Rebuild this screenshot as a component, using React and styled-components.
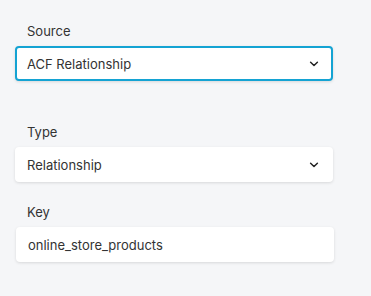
import React from 'react';
import styled, { createGlobalStyle } from 'styled-components';

const GlobalStyle = createGlobalStyle`
  body {
    margin: 0;
    background: #f5f6f8;
    font-family: Inter, "Noto Sans", sans-serif;
  }
`;

export default function App() {
  return (
    <>
      <GlobalStyle />
      <StyledPanel>
        <StyledField $spacing={43}>
          <StyledLabel>Source</StyledLabel>
          <StyledBox $active>
            <StyledValue>ACF Relationship</StyledValue>
            <Chevron />
          </StyledBox>
        </StyledField>
        <StyledField $spacing={22}>
          <StyledLabel>Type</StyledLabel>
          <StyledBox>
            <StyledValue>Relationship</StyledValue>
            <Chevron />
          </StyledBox>
        </StyledField>
        <StyledField>
          <StyledLabel>Key</StyledLabel>
          <StyledBox $shift>
            <StyledValue>online_store_products</StyledValue>
          </StyledBox>
        </StyledField>
      </StyledPanel>
    </>
  );
}

const Chevron = () => (
  <svg width="10" height="6" viewBox="0 0 10 6" fill="none">
    <path d="M1.6 1.3 L5 4.5 L8.4 1.3" stroke="#222" strokeWidth="1.5" strokeLinecap="round" strokeLinejoin="round" />
  </svg>
);

// Styled Components
const StyledPanel = styled.div`
  display: flex;
  flex-direction: column;
  box-sizing: border-box;
  width: 333px;
  height: 296px;
  padding: 23px 0 0 15px;
`;

const StyledField = styled.div`
  display: flex;
  flex-direction: column;
  margin-bottom: ${props => props.$spacing || 0}px;
`;

const StyledLabel = styled.div`
  font-size: 13px;
  line-height: 16px;
  color: #333;
  padding-left: 12px;
  margin-bottom: 7px;
`;

const StyledBox = styled.div`
  display: flex;
  align-items: center;
  justify-content: space-between;
  height: 35px;
  box-sizing: border-box;
  padding: 0 ${props => (props.$active ? 12 : 14)}px 0 ${props => (props.$active ? 10 : 12)}px;
  margin-left: ${props => (props.$shift ? 1 : 0)}px;
  margin-right: ${props => (props.$shift ? -1 : 0)}px;
  background: #fff;
  border-radius: 4px;
  border: ${props => (props.$active ? '2px solid #14a3d3' : 'none')};
  box-shadow: 0 1px 3px rgba(0, 0, 0, 0.12);
`;

const StyledValue = styled.span`
  font-size: 13px;
  color: #333;
`;
